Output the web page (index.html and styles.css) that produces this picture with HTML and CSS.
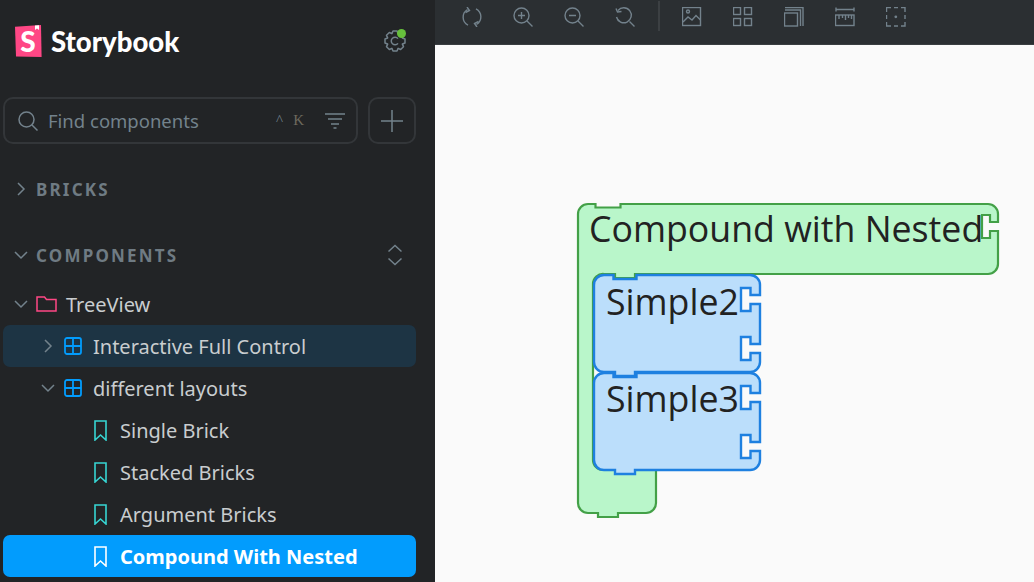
FILE: index.html
```html
<!DOCTYPE html>
<html lang="en">
<head>
    <meta charset="UTF-8">
    <meta name="viewport" content="width=device-width, initial-scale=1.0">
    <title>Storybook</title>
    <link rel="stylesheet" href="styles.css">
</head>
<body>

    <aside class="sidebar">
        <div class="brand">
            <svg class="logo" width="28" height="36" viewBox="0 -1 28 36">
                <path class="logo-page" d="M1 2.700 27 1 27.600 33 2 32.500Z"/>
                <path class="logo-ribbon" d="M21 1.500 25 1.200V6L23 4.500 21 6Z"/>
                <text class="logo-s" x="14" y="28">S</text>
            </svg>
            <span class="brand-name">Storybook</span>
            <span class="settings">
                <svg class="gear" width="24" height="24" viewBox="-12 -12 24 24">
                    <path d="M-3-7.4-2-10H2L3-7.4 3.11-7.35 5.66-8.49 8.49-5.66 7.35-3.11 7.4-3 10-2V2L7.4 3 7.35 3.11 8.49 5.66 5.66 8.49 3.11 7.35 3 7.4 2 10H-2L-3 7.4-3.11 7.35-5.66 8.49-8.49 5.66-7.35 3.11-7.4 3-10 2V-2L-7.4-3-7.35-3.11-8.49-5.66-5.66-8.49-3.11-7.35Z"/>
                    <path d="M3-2.4A3.8 3.8 0 1 0 3 2.4"/>
                </svg>
                <span class="status-dot"></span>
            </span>
        </div>

        <div class="search-row">
            <div class="search">
                <svg class="search-icon" width="20" height="20" viewBox="0 0 20 20">
                    <circle cx="8.500" cy="8.500" r="7.500"/>
                    <path d="M14 14l5.500 5.500"/>
                </svg>
                <span class="search-text">Find components</span>
                <span class="shortcut"><span>^</span><span class="shortcut-key">K</span></span>
                <svg class="filter-icon" width="20" height="16" viewBox="0 0 20 16">
                    <path d="M0 1H20M3 6H17M6 11H14M8.500 15H11.500"/>
                </svg>
            </div>
            <div class="add-btn">
                <svg width="22" height="22" viewBox="0 0 22 22"><path d="M11 0V22M0 11H22"/></svg>
            </div>
        </div>

        <div class="section-head section-first">
            <svg class="chevron" width="14" height="14" viewBox="0 0 14 14"><path d="M4 1l6 6-6 6"/></svg>
            <span>BRICKS</span>
        </div>
        <div class="section-head">
            <svg class="chevron" width="14" height="14" viewBox="0 0 14 14"><path d="M1 4l6 6 6-6"/></svg>
            <span>COMPONENTS</span>
            <svg class="expand" width="16" height="22" viewBox="0 0 16 22"><path d="M1.500 7.500 8 1.500l6.500 6M1.500 14.500l6.500 6 6.500-6"/></svg>
        </div>

        <div class="tree">
            <div class="row level-0">
                <svg class="chevron" width="14" height="14" viewBox="0 0 14 14"><path d="M1 4l6 6 6-6"/></svg>
                <svg class="folder" width="21" height="16" viewBox="0 0 21 16"><path d="M1 15V1H8.500L10.500 3.500H20V15Z"/></svg>
                <span>TreeView</span>
            </div>
            <div class="row level-1 hovered">
                <svg class="chevron" width="14" height="14" viewBox="0 0 14 14"><path d="M4 1l6 6-6 6"/></svg>
                <svg class="grid" width="18" height="18" viewBox="0 0 18 18"><rect x="1" y="1" width="16" height="16" rx="2"/><path d="M9 1V17M1 9H17"/></svg>
                <span>Interactive Full Control</span>
            </div>
            <div class="row level-1">
                <svg class="chevron" width="14" height="14" viewBox="0 0 14 14"><path d="M1 4l6 6 6-6"/></svg>
                <svg class="grid" width="18" height="18" viewBox="0 0 18 18"><rect x="1" y="1" width="16" height="16" rx="2"/><path d="M9 1V17M1 9H17"/></svg>
                <span>different layouts</span>
            </div>
            <div class="row level-2">
                <svg class="bookmark" width="13" height="21" viewBox="0 0 13 21"><path d="M1 1H12V20L6.500 15 1 20Z"/></svg>
                <span>Single Brick</span>
            </div>
            <div class="row level-2">
                <svg class="bookmark" width="13" height="21" viewBox="0 0 13 21"><path d="M1 1H12V20L6.500 15 1 20Z"/></svg>
                <span>Stacked Bricks</span>
            </div>
            <div class="row level-2">
                <svg class="bookmark" width="13" height="21" viewBox="0 0 13 21"><path d="M1 1H12V20L6.500 15 1 20Z"/></svg>
                <span>Argument Bricks</span>
            </div>
            <div class="row level-2 selected">
                <svg class="bookmark" width="13" height="21" viewBox="0 0 13 21"><path d="M1 1H12V20L6.500 15 1 20Z"/></svg>
                <span>Compound With Nested</span>
            </div>
        </div>
    </aside>

    <main class="main">
        <div class="toolbar">
            <svg class="tool" width="20" height="20" viewBox="0 0 20 20">
                <path d="M5.500 2.500A9 9 0 0 0 6 18.200M14.500 17.500A9 9 0 0 0 14 1.800"/>
                <path d="M5 0 7.500 3.500 3.500 5.500M15 20 12.500 16.500 16.500 14.500"/>
            </svg>
            <svg class="tool" width="20" height="20" viewBox="0 0 20 20">
                <circle cx="8.500" cy="8.500" r="7.500"/>
                <path d="M14 14l5.500 5.500M8.500 5V12M5 8.500H12"/>
            </svg>
            <svg class="tool" width="20" height="20" viewBox="0 0 20 20">
                <circle cx="8.500" cy="8.500" r="7.500"/>
                <path d="M14 14l5.500 5.500M5 8.500H12"/>
            </svg>
            <svg class="tool" width="20" height="20" viewBox="0 0 20 20">
                <path d="M3 3.500A7.500 7.500 0 1 1 1.500 10"/>
                <path d="M1 1.500 2.500 5 6.500 4.500M14.500 14.500l5 5"/>
            </svg>
            <span class="tool-sep"></span>
            <svg class="tool" width="20" height="20" viewBox="0 0 20 20">
                <rect x="0.500" y="0.500" width="18" height="18"/>
                <circle cx="6" cy="4.500" r="1.500"/>
                <path d="M1 15 6 10 10 13 14 8.500 18.500 13"/>
            </svg>
            <svg class="tool" width="20" height="20" viewBox="0 0 20 20">
                <rect x="0.500" y="0.500" width="7" height="7"/><rect x="11.500" y="0.500" width="7" height="7"/>
                <rect x="0.500" y="11.500" width="7" height="7"/><rect x="11.500" y="11.500" width="7" height="7"/>
            </svg>
            <svg class="tool" width="20" height="20" viewBox="0 0 20 20">
                <rect x="0.500" y="6" width="13" height="13"/>
                <path d="M1 3H16.500V19M1 0.500H19V19"/>
            </svg>
            <svg class="tool" width="20" height="20" viewBox="0 0 20 20">
                <path d="M1 2.500H19M1 0.500V4.500M19 0.500V4.500"/>
                <rect x="0.500" y="8" width="18.500" height="10.500"/>
                <path d="M4 8V12M7.500 8V11M10.500 8V13M13.500 8V11M16.500 8V12"/>
            </svg>
            <svg class="tool" width="20" height="20" viewBox="0 0 20 20">
                <path d="M0.500 5V0.500H5M8 0.500H12M15 0.500H19V5M19 8V12M19 15V19H15M12 19H8M5 19H0.500V15M0.500 12V8"/>
                <circle class="tool-dot" cx="9.800" cy="9.800" r="1.400"/>
            </svg>
        </div>

        <div class="canvas">
            <svg class="bricks" width="440" height="330" viewBox="570 195 440 330">
                <path class="brick-green" d="M578 214A10 10 0 0 1 588 204H595.500V207.500H620.500V204H988A10 10 0 0 1 998 214V222H990V215H982V238H990V231H998V264A10 10 0 0 1 988 274H635V278H615V274H604A10 10 0 0 0 593 284V460A10 10 0 0 0 603 470H656V503A10 10 0 0 1 646 513H618V517H598V513H588A10 10 0 0 1 578 503Z"/>
                <text class="brick-label" x="589" y="242">Compound with Nested</text>
                <path id="simple" class="brick-blue" d="M594 285A10 10 0 0 1 604 275H613.500V279H636.500V275H750A10 10 0 0 1 760 285V295H750.500V288H741V311H750.500V304H760V344H750.500V337H741V360H750.500V353H760V362A10 10 0 0 1 750 372H635V376H615V372H604A10 10 0 0 1 594 362Z"/>
                <text class="brick-label" x="606" y="315">Simple2</text>
                <use href="#simple" y="98"/>
                <text class="brick-label" x="606" y="412">Simple3</text>
            </svg>
        </div>
    </main>

</body>
</html>
```

FILE: styles.css
```css
* {
    box-sizing: border-box;
}
html, body {
    height: 100%;
}
body {
    margin: 0;
    display: flex;
    overflow: hidden;
    font-family: "Noto Sans", sans-serif;
}
svg {
    display: block;
    flex: none;
    fill: none;
}

/* sidebar */
.sidebar {
    width: 435px;
    flex: none;
    padding: 0 19px 0 3px;
    background-color: #222426;
    color: #c9cdcf;
    font-size: 20px;
}
.brand {
    height: 82px;
    display: flex;
    align-items: center;
    padding-left: 11px;
}
.logo-page {
    fill: #ff4785;
}
.logo-ribbon {
    fill: #fff;
}
.logo-s {
    fill: #fff;
    font-family: "Lato", sans-serif;
    font-weight: 900;
    font-size: 28px;
    text-anchor: middle;
}
.brand-name {
    margin-left: 9px;
    color: #fff;
    font-family: "Lato", sans-serif;
    font-size: 27.500px;
    font-weight: 900;
}
.settings {
    margin-left: auto;
    margin-right: 9px;
    position: relative;
}
.gear path {
    stroke: #73828c;
    stroke-width: 1.500;
    stroke-linejoin: round;
}
.status-dot {
    position: absolute;
    top: 0;
    right: 1px;
    width: 9px;
    height: 9px;
    border-radius: 50%;
    background-color: #66bf3c;
}

.search-row {
    margin-top: 15px;
    display: flex;
    gap: 10px;
}
.search, .add-btn {
    height: 47px;
    border: 2px solid #333639;
    border-radius: 10px;
    display: flex;
    align-items: center;
}
.search {
    flex: 1;
    padding: 0 11px 0 13px;
    color: #73828c;
}
.add-btn {
    width: 48px;
    justify-content: center;
}
.add-btn path, .filter-icon path, .search-icon * {
    stroke: #73828c;
    stroke-width: 1.500;
}
.search-text {
    margin-left: 10px;
    font-size: 18.500px;
}
.shortcut {
    margin-left: auto;
    margin-right: 21px;
    display: flex;
    gap: 10px;
    font-family: "Liberation Serif", serif;
    font-size: 15px;
}
.shortcut-key {
    color: #6d6a5e;
}

.section-head {
    height: 42px;
    margin-top: 24px;
    padding-left: 11px;
    display: flex;
    align-items: center;
    gap: 8px;
    color: #6f7b83;
    font-size: 17px;
    font-weight: 700;
    letter-spacing: 2.200px;
}
.chevron path {
    stroke: #73828c;
    stroke-width: 1.500;
}
.expand {
    margin-left: auto;
    margin-right: 13px;
}
.expand path {
    stroke: #73828c;
    stroke-width: 1.500;
}

.tree {
    margin-top: 7px;
}
.row {
    height: 42px;
    display: flex;
    align-items: center;
    border-radius: 7px;
}
.level-0 {
    padding-left: 11px;
    gap: 8px;
}
.level-0 span {
    margin-left: 1px;
}
.level-1 {
    padding-left: 38px;
    gap: 9px;
}
.level-1 span {
    margin-left: 2px;
}
.level-2 {
    padding-left: 91px;
    gap: 13px;
}
.folder path {
    stroke: #ff4785;
    stroke-width: 1.500;
}
.grid * {
    stroke: #029cfd;
    stroke-width: 1.800;
}
.bookmark path {
    stroke: #37d5d3;
    stroke-width: 1.600;
}
.hovered {
    background-color: #1d3444;
}
.selected {
    background-color: #029cfd;
    color: #fff;
    font-weight: 700;
}
.selected .bookmark path {
    stroke: #fff;
}

/* preview side */
.main {
    flex: 1;
    min-width: 0;
    background-color: #fafafa;
}
.toolbar {
    height: 45px;
    padding: 7px 0 0 27px;
    display: flex;
    align-items: flex-start;
    gap: 31px;
    background-color: #2b2f32;
    border-bottom: 1px solid #3a3e41;
}
.tool * {
    stroke: #73828c;
    stroke-width: 1.400;
}
.tool .tool-dot {
    fill: #73828c;
    stroke: none;
}
.tool-sep {
    width: 2px;
    height: 30px;
    margin: -6px -9px 0 -8px;
    background-color: #3c4043;
}
.bricks {
    margin: 150px 0 0 135px;
}
.brick-green {
    fill: #b9f6ca;
    stroke: #43a047;
    stroke-width: 2.200;
}
.brick-blue, use {
    fill: #bbdefb;
    stroke: #1e80e0;
    stroke-width: 2.400;
}
.brick-label {
    fill: #222;
    font-family: "Open Sans", sans-serif;
    font-size: 35.700px;
}
```
